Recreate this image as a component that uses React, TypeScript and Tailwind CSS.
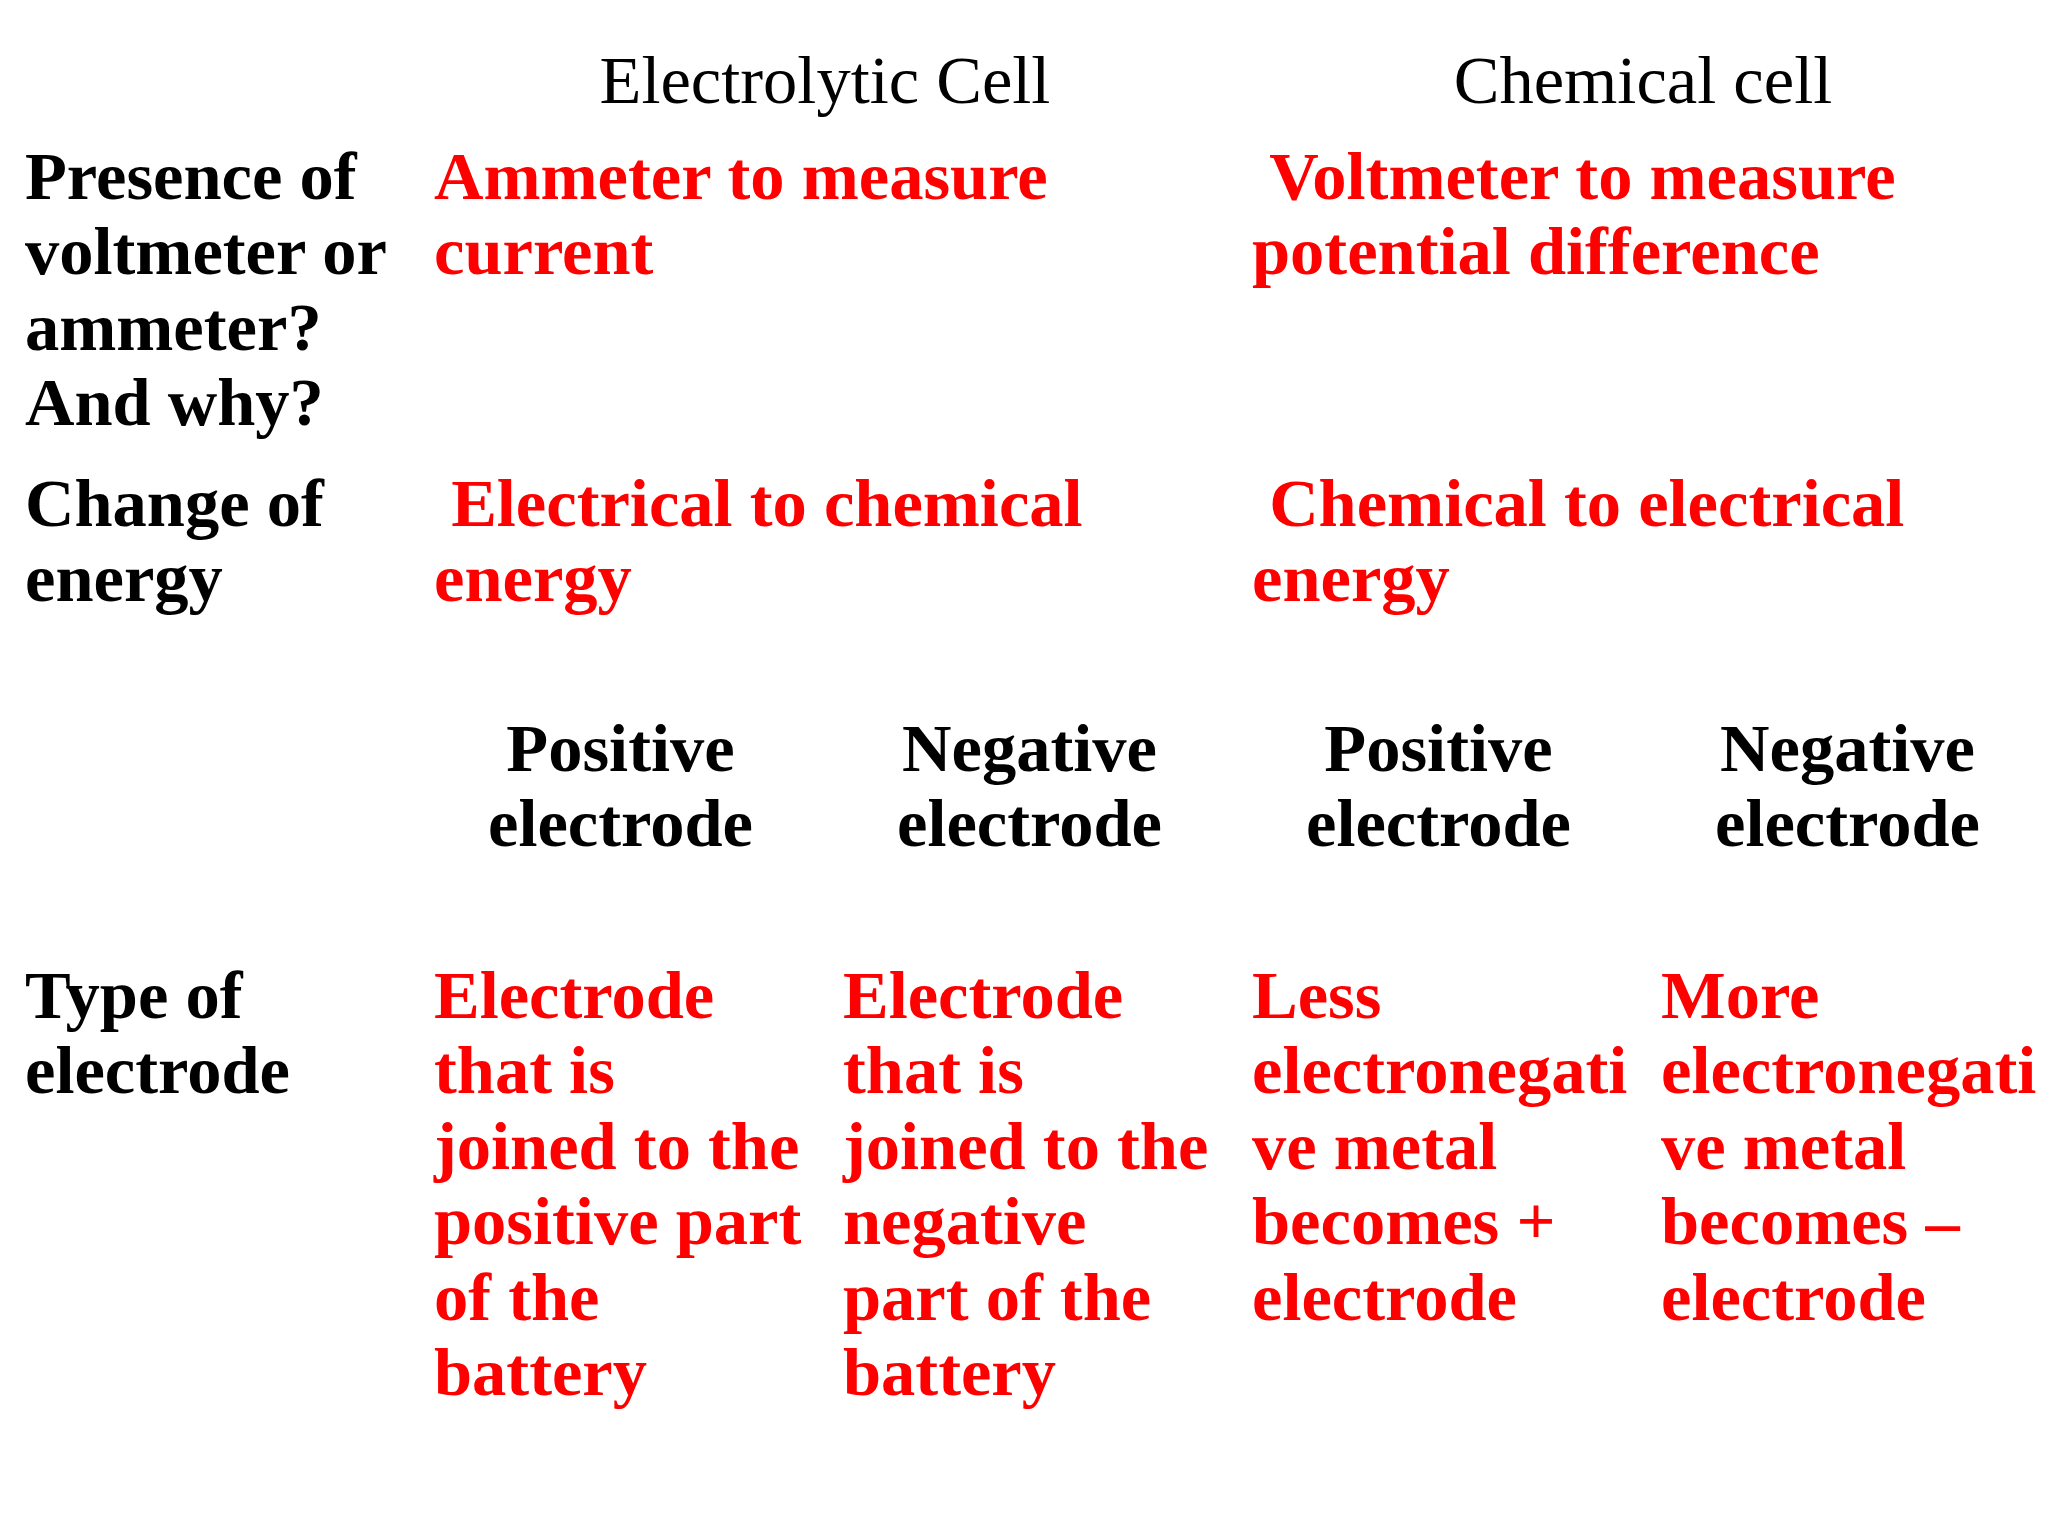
import React from "react";

const RED = "text-[#ff0000]";

function Lines({ lines, className = "" }: { lines: string[]; className?: string }) {
  return (
    <div className={className}>
      {lines.map((l, i) => (
        <div key={i} className="whitespace-nowrap">
          {l}
        </div>
      ))}
    </div>
  );
}

export default function App() {
  return (
    <div
      className="w-[2048px] h-[1536px] overflow-hidden bg-white text-black text-[68.5px] leading-[75.4px]"
      style={{ fontFamily: '"Liberation Serif", "Times New Roman", serif' }}
    >
      <div className="pl-[7px] pt-[43px] grid grid-cols-[409px_409px_409px_409px_409px]">
        {/* Header row */}
        <div className="h-[96px]" />
        <div className="col-span-2 h-[96px] text-center font-normal">Electrolytic Cell</div>
        <div className="col-span-2 h-[96px] text-center font-normal">Chemical cell</div>

        {/* Row 1 */}
        <Lines
          className="h-[327px] px-[18px] font-bold"
          lines={["Presence of", "voltmeter or", "ammeter?", "And why?"]}
        />
        <Lines
          className={`col-span-2 h-[327px] px-[18px] font-bold ${RED}`}
          lines={["Ammeter to measure", "current"]}
        />
        <Lines
          className={`col-span-2 h-[327px] px-[18px] font-bold ${RED}`}
          lines={["\u00a0Voltmeter to measure", "potential difference"]}
        />

        {/* Row 2 */}
        <Lines className="h-[245px] px-[18px] font-bold" lines={["Change of", "energy"]} />
        <Lines
          className={`col-span-2 h-[245px] px-[18px] font-bold ${RED}`}
          lines={["\u00a0Electrical to chemical", "energy"]}
        />
        <Lines
          className={`col-span-2 h-[245px] px-[18px] font-bold ${RED}`}
          lines={["\u00a0Chemical to electrical", "energy"]}
        />

        {/* Row 3 */}
        <div className="h-[247px]" />
        <Lines className="h-[247px] px-[18px] font-bold text-center" lines={["Positive", "electrode"]} />
        <Lines className="h-[247px] px-[18px] font-bold text-center" lines={["Negative", "electrode"]} />
        <Lines className="h-[247px] px-[18px] font-bold text-center" lines={["Positive", "electrode"]} />
        <Lines className="h-[247px] px-[18px] font-bold text-center" lines={["Negative", "electrode"]} />

        {/* Row 4 */}
        <Lines className="px-[18px] font-bold" lines={["Type of", "electrode"]} />
        <Lines
          className={`px-[18px] font-bold ${RED}`}
          lines={["Electrode", "that is", "joined to the", "positive part", "of the", "battery"]}
        />
        <Lines
          className={`px-[18px] font-bold ${RED}`}
          lines={["Electrode", "that is", "joined to the", "negative", "part of the", "battery"]}
        />
        <Lines
          className={`px-[18px] font-bold ${RED}`}
          lines={["Less", "electronegati", "ve metal", "becomes +", "electrode"]}
        />
        <Lines
          className={`px-[18px] font-bold ${RED}`}
          lines={["More", "electronegati", "ve metal", "becomes \u2013", "electrode"]}
        />
      </div>
    </div>
  );
}
